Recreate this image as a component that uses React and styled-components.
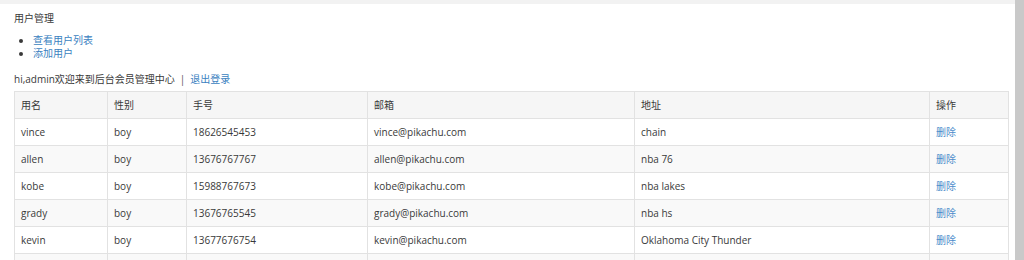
import React from "react";
import styled, { createGlobalStyle } from "styled-components";

const Global = createGlobalStyle`
  html, body { margin: 0; padding: 0; background: #fff; }
  body {
    font-family: "Open Sans", "Noto Sans CJK SC", sans-serif;
    font-size: 10px;
    color: #393939;
    overflow: hidden;
  }
`;

const Page = styled.div`
  display: flex;
  height: 260px;
  overflow: hidden;
`;

const Main = styled.div`
  flex: 1;
  min-width: 0;
  display: flex;
  flex-direction: column;
`;

const TopStrip = styled.div`
  height: 4px;
  flex: none;
  background: #f2f2f2;
`;

const Content = styled.div`
  padding: 0 7px 0 14px;
`;

const Title = styled.div`
  margin: 8px 0 9px;
  line-height: 13px;
`;

const Menu = styled.ul`
  margin: 0;
  padding-left: 19px;
  list-style: disc;
  line-height: 13px;
`;

const Link = styled.a`
  color: ${(p) => (p.$light ? "#4a8ccb" : "#3a7fbf")};
  text-decoration: none;
  cursor: pointer;
`;

const Welcome = styled.div`
  margin: 13px 0 5px;
  line-height: 13px;
`;

const Sep = styled.span`
  margin: 0 5px;
  color: #555;
`;

const Table = styled.table`
  width: 994px;
  border-collapse: collapse;
  table-layout: fixed;
  border: 1px solid #e2e2e2;
`;

const HeadCell = styled.th`
  text-align: left;
  font-weight: normal;
  background: #f6f6f6;
  border: 1px solid #e2e2e2;
  padding: 6px 6px;
  line-height: 14px;
  height: 14px;
`;

const Row = styled.tr`
  background: ${(p) => (p.$striped ? "#f9f9f9" : "#fff")};
`;

const Cell = styled.td`
  border: 1px solid #e2e2e2;
  padding: 6px 6px;
  line-height: 14px;
  height: 14px;
  white-space: nowrap;
  overflow: hidden;
`;

const ScrollTrack = styled.div`
  width: 9px;
  flex: none;
  background: #c9c9c9;
`;

const cols = [93, 79, 181, 267, 295, 79];
const heads = ["用名", "性别", "手号", "邮箱", "地址", "操作"];
const rows = [
  ["vince", "boy", "18626545453", "vince@pikachu.com", "chain"],
  ["allen", "boy", "13676767767", "allen@pikachu.com", "nba 76"],
  ["kobe", "boy", "15988767673", "kobe@pikachu.com", "nba lakes"],
  ["grady", "boy", "13676765545", "grady@pikachu.com", "nba hs"],
  ["kevin", "boy", "13677676754", "kevin@pikachu.com", "Oklahoma City Thunder"],
];

export default function App() {
  return (
    <>
      <Global />
      <Page>
        <Main>
          <TopStrip />
          <Content>
            <Title>用户管理</Title>
            <Menu>
              <li><Link>查看用户列表</Link></li>
              <li><Link>添加用户</Link></li>
            </Menu>
            <Welcome>
              hi,admin欢迎来到后台会员管理中心<Sep>|</Sep><Link>退出登录</Link>
            </Welcome>
            <Table>
              <colgroup>
                {cols.map((w, i) => (
                  <col key={i} style={{ width: w }} />
                ))}
              </colgroup>
              <thead>
                <tr>
                  {heads.map((h) => (
                    <HeadCell key={h}>{h}</HeadCell>
                  ))}
                </tr>
              </thead>
              <tbody>
                {rows.map((r, i) => (
                  <Row key={r[0]} $striped={i % 2 === 1}>
                    {r.map((c, j) => (
                      <Cell key={j}>{c}</Cell>
                    ))}
                    <Cell><Link $light>删除</Link></Cell>
                  </Row>
                ))}
                <Row $striped>
                  {cols.map((_, j) => (
                    <Cell key={j}>&nbsp;</Cell>
                  ))}
                </Row>
              </tbody>
            </Table>
          </Content>
        </Main>
        <ScrollTrack />
      </Page>
    </>
  );
}
